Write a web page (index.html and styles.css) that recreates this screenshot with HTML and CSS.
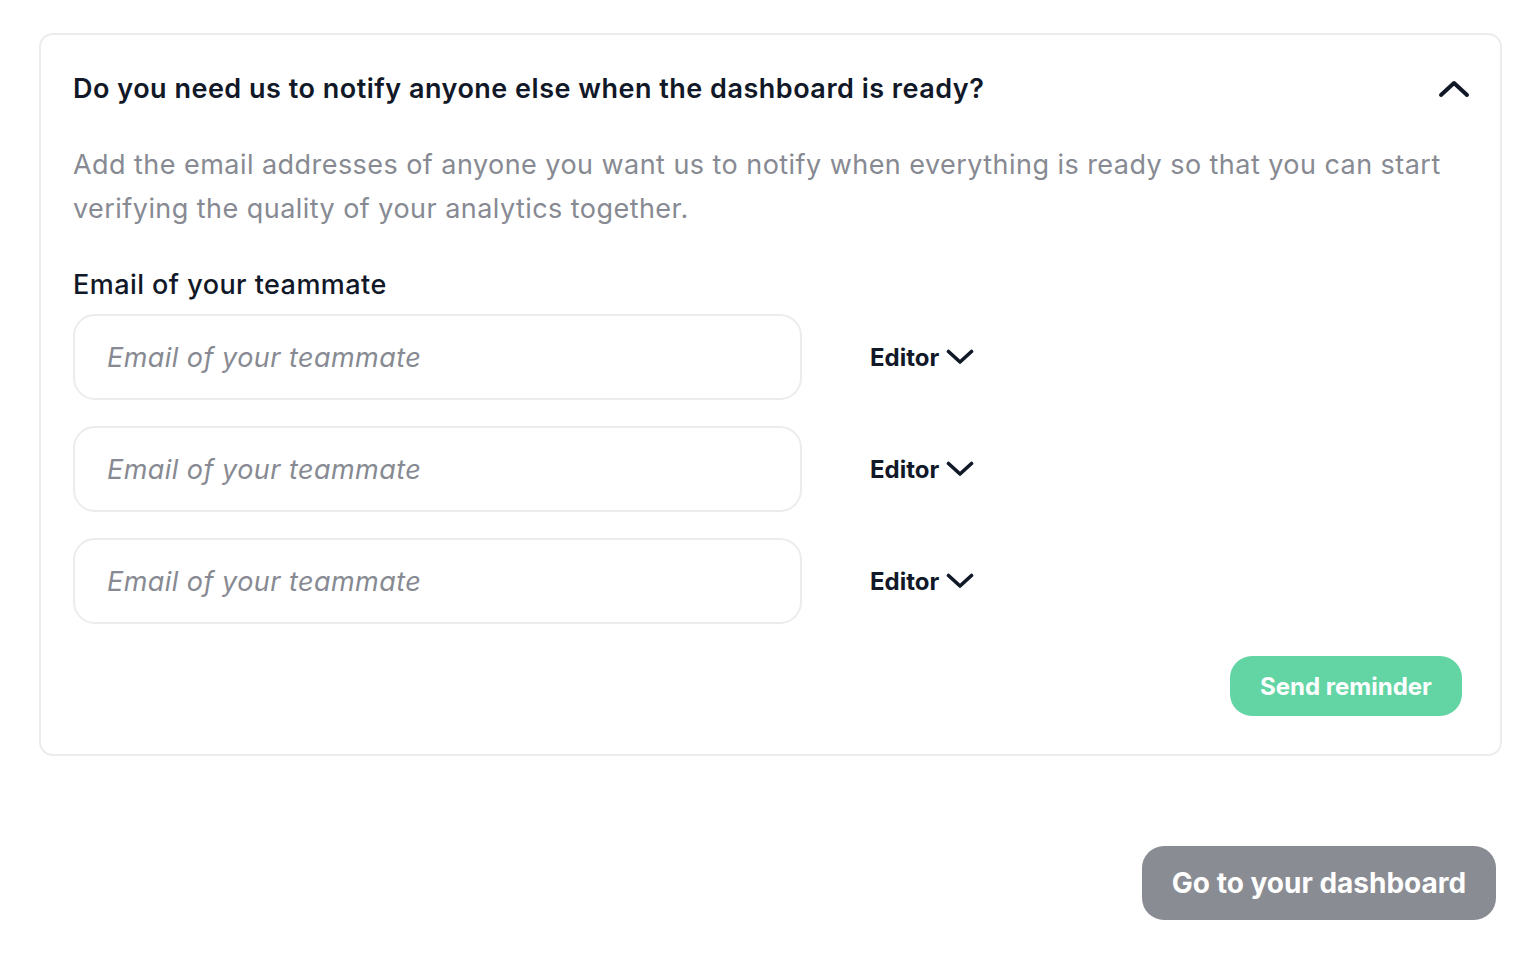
FILE: index.html
```html
<!DOCTYPE html>
<html lang="en">
<head>
<meta charset="utf-8">
<title>Notify teammates</title>
<link rel="stylesheet" href="styles.css">
</head>
<body>
<main class="page">
  <section class="card">
    <div class="card-head">
      <h2 class="title">Do you need us to notify anyone else when the dashboard is ready?</h2>
      <svg class="chev-up" width="32" height="20" viewBox="0 0 32 20" aria-hidden="true"><path d="M3 16 L16 4 L29 16" fill="none" stroke="#111827" stroke-width="4" stroke-linecap="round" stroke-linejoin="round"/></svg>
    </div>
    <p class="desc">Add the email addresses of anyone you want us to notify when everything is ready so that you can start verifying the quality of your analytics together.</p>
    <label class="label">Email of your teammate</label>
    <div class="rows">
      <div class="row">
        <input class="email" type="text" placeholder="Email of your teammate">
        <button class="role">Editor <svg width="28" height="18" viewBox="0 0 28 18" aria-hidden="true"><path d="M2.5 3.5 L14 14 L25.5 3.5" fill="none" stroke="#111827" stroke-width="3.6" stroke-linecap="round" stroke-linejoin="round"/></svg></button>
      </div>
      <div class="row">
        <input class="email" type="text" placeholder="Email of your teammate">
        <button class="role">Editor <svg width="28" height="18" viewBox="0 0 28 18" aria-hidden="true"><path d="M2.5 3.5 L14 14 L25.5 3.5" fill="none" stroke="#111827" stroke-width="3.6" stroke-linecap="round" stroke-linejoin="round"/></svg></button>
      </div>
      <div class="row">
        <input class="email" type="text" placeholder="Email of your teammate">
        <button class="role">Editor <svg width="28" height="18" viewBox="0 0 28 18" aria-hidden="true"><path d="M2.5 3.5 L14 14 L25.5 3.5" fill="none" stroke="#111827" stroke-width="3.6" stroke-linecap="round" stroke-linejoin="round"/></svg></button>
      </div>
    </div>
    <div class="actions">
      <button class="send">Send reminder</button>
    </div>
  </section>
  <div class="footer">
    <button class="dash">Go to your dashboard</button>
  </div>
</main>
</body>
</html>
```
FILE: styles.css
```css
* { box-sizing: border-box; }
html, body { margin: 0; padding: 0; background: #ffffff; }
body { font-family: Inter, "Noto Sans", sans-serif; color: #111827; }
.page { padding: 33px 31px 0 39px; }
.card {
  width: 1463px;
  border: 2px solid #ececed;
  border-radius: 14px;
  padding: 35px 38px 38px 32px;
}
.card-head { display: flex; align-items: center; justify-content: space-between; }
.title { margin: 0; font-size: 27px; font-weight: 600; line-height: 38px; color: #111827; letter-spacing: 0.5px; }
.chev-up { margin-right: -8px; }
.desc { margin: 35px 0 0; font-size: 27px; line-height: 44px; color: #878a92; letter-spacing: 0.45px; }
.label { display: block; margin-top: 35px; font-size: 27px; font-weight: 500; line-height: 38px; color: #111827; letter-spacing: 0.45px; }
.rows { display: flex; flex-direction: column; gap: 26px; margin-top: 10px; }
.row { display: flex; align-items: center; }
.email {
  width: 729px; height: 86px;
  border: 2px solid #ececed; border-radius: 22px;
  padding: 0 32px;
  font-family: Inter, "Noto Sans", sans-serif; font-size: 27px; font-style: italic; letter-spacing: 0.45px;
  color: #111827; background: #fff; outline: none;
}
.email::placeholder { color: #878a92; font-style: italic; }
.role {
  margin-left: 68px; display: flex; align-items: center; gap: 7px;
  border: 0; background: none; padding: 0;
  font-family: Inter, "Noto Sans", sans-serif; font-size: 24px; font-weight: 700; color: #111827;
}
.actions { display: flex; justify-content: flex-end; margin-top: 32px; }
.send {
  width: 232px; height: 60px; border: 0; border-radius: 22px;
  background: #63d5a5; color: #fff;
  font-family: Inter, "Noto Sans", sans-serif; font-size: 24px; font-weight: 700;
}
.footer { display: flex; justify-content: flex-end; margin-top: 90px; padding-right: 5px; }
.dash {
  width: 354px; height: 74px; border: 0; border-radius: 22px;
  background: #8a8c93; color: #fff;
  font-family: Inter, "Noto Sans", sans-serif; font-size: 28px; font-weight: 700;
}
```
